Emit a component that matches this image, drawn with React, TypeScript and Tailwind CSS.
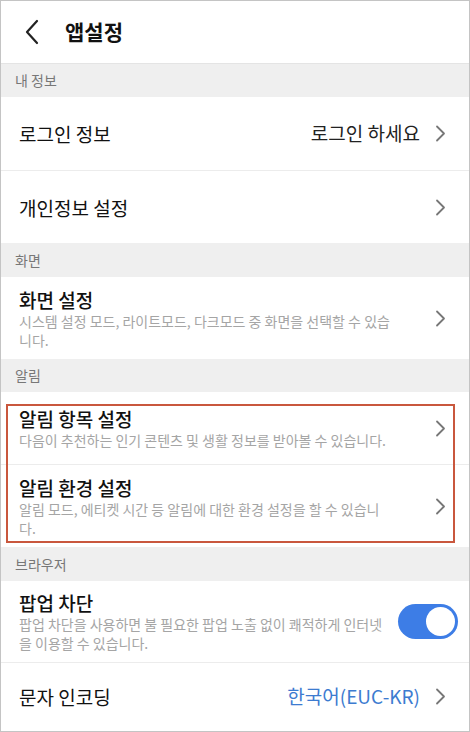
import React from "react"

const FONT = { fontFamily: '"Noto Sans CJK KR", "Noto Sans", sans-serif' }

function Chevron() {
    return (
        <svg width="11" height="17" viewBox="0 0 11 17" className="shrink-0">
            <path d="M2 1.5 L9 8.5 L2 15.5" fill="none" stroke="#777" strokeWidth="1.8" strokeLinecap="round" strokeLinejoin="round" />
        </svg>
    )
}

function Section({ label, className = "" }: { label: string; className?: string }) {
    return (
        <div className={`flex items-center bg-[#efefef] px-[14px] text-[14px] text-[#777] ${className}`}>
            {label}
        </div>
    )
}

function Row({
    title,
    desc,
    value,
    valueBlue,
    height,
    border = true,
    right,
}: {
    title: string
    desc?: string
    value?: string
    valueBlue?: boolean
    height: string
    border?: boolean
    right?: React.ReactNode
}) {
    return (
        <div className={`flex items-center justify-between pl-[18px] pr-[23px] ${height} ${border ? "border-b border-[#ececec]" : ""}`}>
            <div className="flex flex-col">
                <div className={`text-[19px] leading-[25px] text-[#111] ${desc ? "font-medium" : ""}`}>{title}</div>
                {desc && (
                    <div className="w-[375px] break-all text-[14px] leading-[19px] text-[#a5a5a5]">{desc}</div>
                )}
            </div>
            {right ?? (
                <div className="flex items-center gap-[15px]">
                    {value && (
                        <span className={`text-[19px] ${valueBlue ? "text-[#3d7bd0]" : "text-[#222]"}`}>{value}</span>
                    )}
                    <Chevron />
                </div>
            )}
        </div>
    )
}

function Toggle() {
    return (
        <div className="mr-[-12px] flex h-[35px] w-[60px] items-center justify-end rounded-full bg-[#3d7de6] pr-[3px]">
            <div className="h-[29px] w-[29px] rounded-full bg-white" />
        </div>
    )
}

export default function App() {
    return (
        <div style={FONT} className="flex h-[732px] w-[470px] flex-col overflow-hidden border border-[#c4c4c4] bg-white">
            {/* Header */}
            <div className="flex h-[63px] shrink-0 items-center border-b border-[#e4e4e4]">
                <svg width="16" height="26" viewBox="0 0 16 26" className="ml-[23px]">
                    <path d="M13 2 L3 13 L13 24" fill="none" stroke="#222" strokeWidth="2.2" strokeLinecap="round" strokeLinejoin="round" />
                </svg>
                <h1 className="ml-[25px] text-[21px] font-bold text-[#111]">앱설정</h1>
            </div>

            <Section label="내 정보" className="h-[33px]" />
            <Row title="로그인 정보" value="로그인 하세요" height="h-[74px]" />
            <Row title="개인정보 설정" height="h-[72px]" border={false} />

            <Section label="화면" className="h-[34px]" />
            <Row
                title="화면 설정"
                desc="시스템 설정 모드, 라이트모드, 다크모드 중 화면을 선택할 수 있습니다."
                height="h-[82px]"
                border={false}
            />

            <Section label="알림" className="h-[33px]" />
            <div className="relative">
                <Row title="알림 항목 설정" desc="다음이 추천하는 인기 콘텐츠 및 생활 정보를 받아볼 수 있습니다." height="h-[73px]" />
                <Row
                    title="알림 환경 설정"
                    desc="알림 모드, 에티켓 시간 등 알림에 대한 환경 설정을 할 수 있습니다."
                    height="h-[82px]"
                    border={false}
                />
                <div className="pointer-events-none absolute left-[5px] top-[12px] h-[139px] w-[449px] border-2 border-[#c9573d]" />
            </div>

            <Section label="브라우저" className="h-[34px]" />
            <Row
                title="팝업 차단"
                desc="팝업 차단을 사용하면 불 필요한 팝업 노출 없이 쾌적하게 인터넷을 이용할 수 있습니다."
                height="h-[82px]"
                right={<Toggle />}
            />
            <Row title="문자 인코딩" value="한국어(EUC-KR)" valueBlue height="h-[67px]" border={false} />
        </div>
    )
}
